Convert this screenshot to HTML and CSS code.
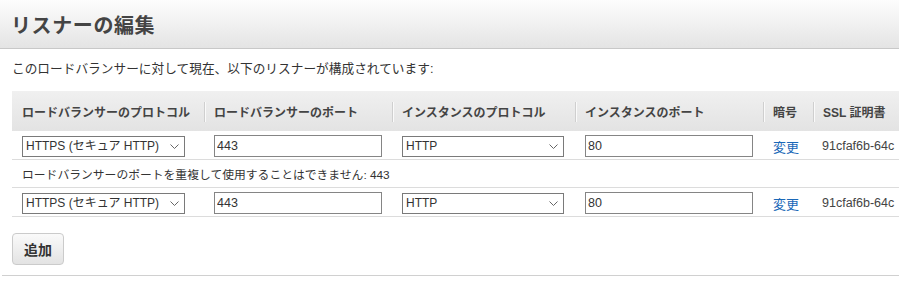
FILE: index.html
```html
<!DOCTYPE html>
<html lang="ja">
<head>
    <meta charset="UTF-8">
    <title>リスナーの編集</title>
    <link rel="stylesheet" href="styles.css">
</head>
<body>
    <div class="page-header">
        <h1>リスナーの編集</h1>
    </div>

    <div class="content">
        <p class="intro">このロードバランサーに対して現在、以下のリスナーが構成されています:</p>

        <table class="listeners">
            <colgroup>
                <col class="c-lb-proto">
                <col class="c-lb-port">
                <col class="c-inst-proto">
                <col class="c-inst-port">
                <col class="c-cipher">
                <col class="c-cert">
            </colgroup>
            <thead>
                <tr>
                    <th>ロードバランサーのプロトコル</th>
                    <th>ロードバランサーのポート</th>
                    <th>インスタンスのプロトコル</th>
                    <th>インスタンスのポート</th>
                    <th>暗号</th>
                    <th>SSL 証明書</th>
                </tr>
            </thead>
            <tbody>
                <tr>
                    <td>
                        <select class="proto-select">
                            <option>HTTPS (セキュア HTTP)</option>
                        </select>
                    </td>
                    <td><input type="text" value="443"></td>
                    <td>
                        <select class="inst-select">
                            <option>HTTP</option>
                        </select>
                    </td>
                    <td><input type="text" value="80"></td>
                    <td><a href="#">変更</a></td>
                    <td class="cert">91cfaf6b-64c</td>
                </tr>
                <tr class="error-row">
                    <td colspan="6">ロードバランサーのポートを重複して使用することはできません: 443</td>
                </tr>
                <tr>
                    <td>
                        <select class="proto-select">
                            <option>HTTPS (セキュア HTTP)</option>
                        </select>
                    </td>
                    <td><input type="text" value="443"></td>
                    <td>
                        <select class="inst-select">
                            <option>HTTP</option>
                        </select>
                    </td>
                    <td><input type="text" value="80"></td>
                    <td><a href="#">変更</a></td>
                    <td class="cert">91cfaf6b-64c</td>
                </tr>
            </tbody>
        </table>

        <button class="btn-add">追加</button>
    </div>
    <div class="footer-line"></div>
</body>
</html>
```

FILE: styles.css
```css
* {
    box-sizing: border-box;
}

body {
    margin: 0;
    font-family: "Liberation Sans", "Noto Sans CJK JP", sans-serif;
    font-size: 12px;
    color: #333;
    background: #fff;
    overflow: hidden;
}

.page-header {
    height: 49px;
    padding: 0 11px;
    background: linear-gradient(#fdfdfd, #e4e4e4);
    border-bottom: 1px solid #c8c8c8;
    display: flex;
    align-items: center;
}

.page-header h1 {
    margin: 0;
    font-size: 20px;
    font-weight: bold;
    color: #444;
    letter-spacing: 0.6px;
}

.content {
    padding: 0 0 0 12px;
}

.intro {
    margin: 0;
    padding: 9px 0 0 0;
    height: 42px;
    font-size: 12.7px;
}

.listeners {
    border-collapse: collapse;
    table-layout: fixed;
    width: 887px;
}

.c-lb-proto { width: 192px; }
.c-lb-port { width: 188px; }
.c-inst-proto { width: 183px; }
.c-inst-port { width: 188px; }
.c-cipher { width: 50px; }
.c-cert { width: 86px; }

.listeners th {
    height: 40px;
    padding: 0 10px;
    text-align: left;
    font-size: 12px;
    font-weight: bold;
    color: #444;
    background: linear-gradient(#f0f0f0, #e3e3e3);
    position: relative;
    white-space: nowrap;
}

.listeners th + th::before {
    content: "";
    position: absolute;
    left: 0;
    top: 11px;
    height: 20px;
    width: 1px;
    background: #cfcfcf;
    box-shadow: 1px 0 0 #fafafa;
}

.listeners td {
    padding: 4px 10px 2px;
    border-bottom: 1px solid #dcdcdc;
    white-space: nowrap;
    vertical-align: middle;
}

.error-row td {
    height: 28px;
    padding: 0 10px;
    font-size: 11.8px;
}

select,
input {
    font-family: "Liberation Sans", "Noto Sans CJK JP", sans-serif;
    font-size: 12.5px;
    color: #333;
    margin: 0;
}

select {
    appearance: none;
    height: 21px;
    padding: 0 18px 0 3px;
    border: 1px solid #7a7a7a;
    border-radius: 0;
    font-size: 12px;
    background: #fff url("data:image/svg+xml,%3Csvg xmlns='http://www.w3.org/2000/svg' width='9' height='5'%3E%3Cpath d='M0.5 0.5 L4.5 4.5 L8.5 0.5' fill='none' stroke='%23666' stroke-width='1'/%3E%3C/svg%3E") no-repeat right 5px center;
}

.proto-select { width: 163px; }
.inst-select { width: 162px; }

input[type="text"] {
    width: 168px;
    height: 22px;
    padding: 0 2px;
    border: 1px solid #858585;
}

.listeners a {
    color: #1a68b8;
    text-decoration: none;
    font-size: 13px;
}

.cert {
    padding-left: 9px !important;
    padding-right: 0 !important;
    font-size: 12.5px;
    color: #444;
}

.btn-add {
    margin-top: 16px;
    width: 52px;
    height: 32px;
    font-family: "Liberation Sans", "Noto Sans CJK JP", sans-serif;
    font-size: 14px;
    font-weight: bold;
    color: #333;
    background: linear-gradient(#fafafa, #e3e3e3);
    border: 1px solid #cbcbcb;
    border-radius: 4px;
}

.footer-line {
    margin: 10px 0 0 2px;
    border-top: 1px solid #d0d0d0;
}
```
